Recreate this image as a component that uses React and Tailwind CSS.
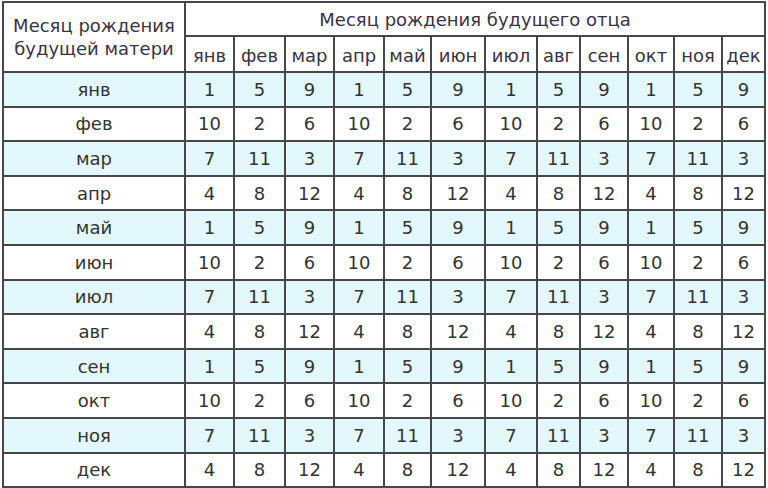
import React from "react";

const months = ["янв", "фев", "мар", "апр", "май", "июн", "июл", "авг", "сен", "окт", "ноя", "дек"];
const patterns = [
  [1, 5, 9],
  [10, 2, 6],
  [7, 11, 3],
  [4, 8, 12],
];
const colWidths = [182, 49, 51, 49, 50, 47, 54, 52, 43, 48, 46, 48, 43];

const cell = "border-2 border-[#474747] text-center align-middle p-0";

const App = () => {
  return (
    <div className="w-[768px] h-[488px] overflow-hidden bg-white pt-[1px] pl-[2px] text-[#333] text-[18px] leading-[23px]" style={{ fontFamily: '"DejaVu Sans", Verdana, sans-serif' }}>
      <table className="border-collapse table-fixed w-[764px]">
        <colgroup>
          {colWidths.map((w, i) => (
            <col key={i} style={{ width: w }} />
          ))}
        </colgroup>
        <thead>
          <tr className="h-[34px]">
            <th rowSpan={2} className={`${cell} font-normal text-[#3a3244]`}>
              Месяц рождения
              <br />
              будущей матери
            </th>
            <th colSpan={12} className={`${cell} font-normal text-[#3a3244]`}>
              Месяц рождения будущего отца
            </th>
          </tr>
          <tr className="h-[36px]">
            {months.map((m) => (
              <th key={m} className={`${cell} font-normal text-[#3a3244] pt-[3px]`}>
                {m}
              </th>
            ))}
          </tr>
        </thead>
        <tbody>
          {months.map((m, i) => {
            const row = patterns[i % 4];
            return (
              <tr key={m} className={`h-[34.6px] ${i % 2 === 0 ? "bg-[#e2f8fc]" : "bg-white"}`}>
                <td className={cell}>{m}</td>
                {months.map((_, j) => (
                  <td key={j} className={cell}>
                    {row[j % 3]}
                  </td>
                ))}
              </tr>
            );
          })}
        </tbody>
      </table>
    </div>
  );
};

export default App;
